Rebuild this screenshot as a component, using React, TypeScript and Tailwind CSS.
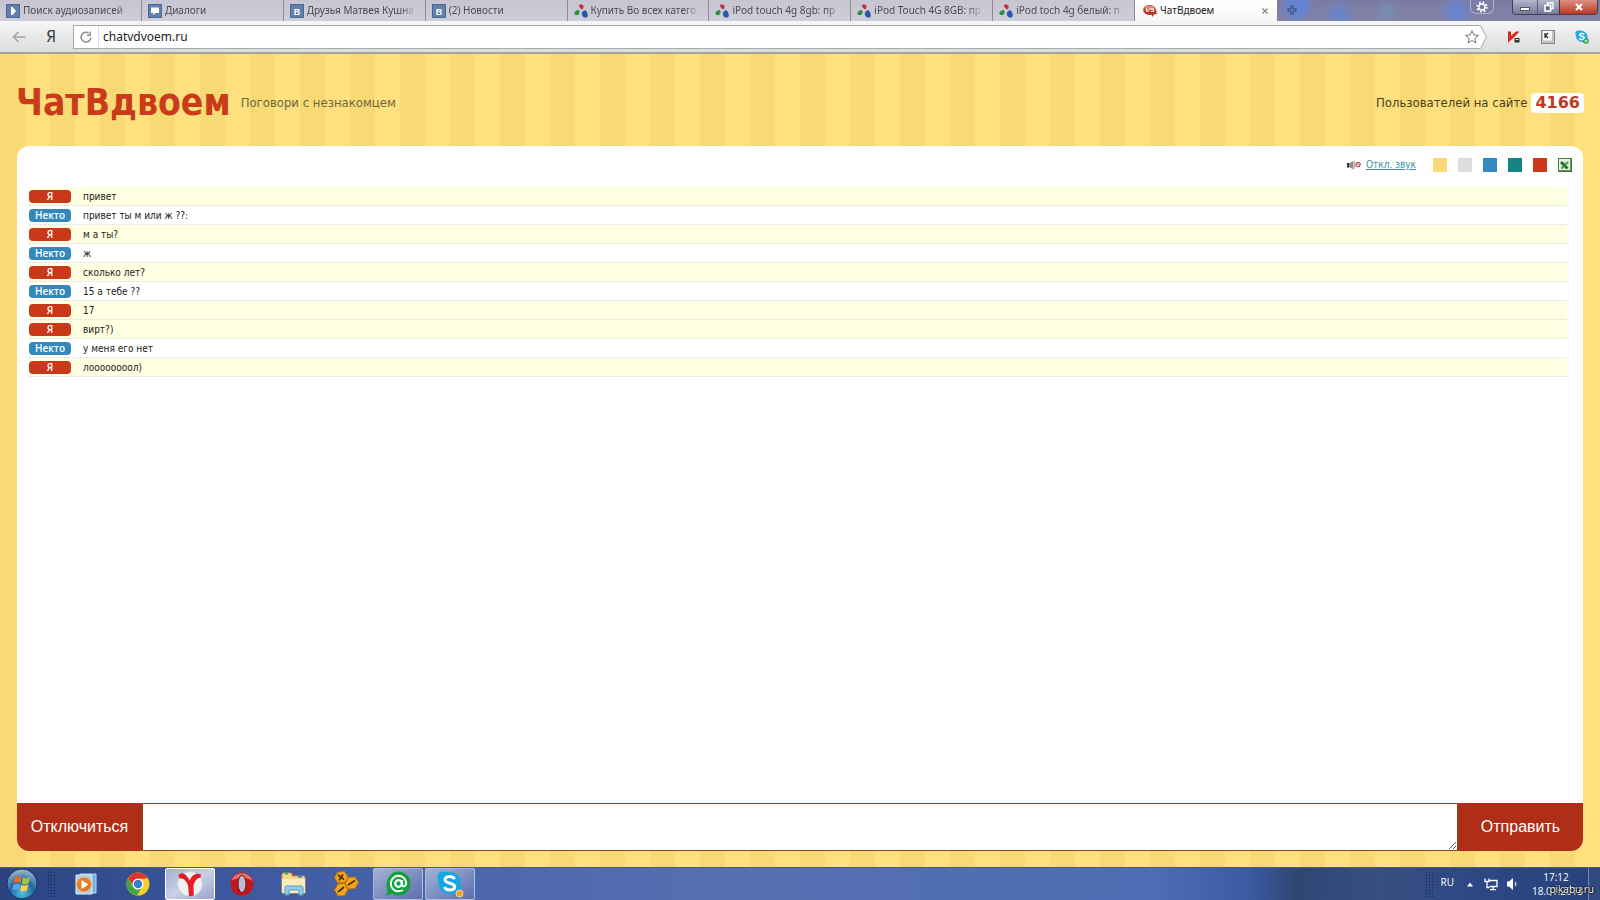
import React, { useState } from 'react';

type Favicon = 'audio' | 'dialog' | 'vk' | 'avito' | 'chat';

const tabs: { title: string; icon: Favicon }[] = [
  { title: 'Поиск аудиозаписей', icon: 'audio' },
  { title: 'Диалоги', icon: 'dialog' },
  { title: 'Друзья Матвея Кушна', icon: 'vk' },
  { title: '(2) Новости', icon: 'vk' },
  { title: 'Купить Во всех катего', icon: 'avito' },
  { title: 'iPod touch 4g 8gb: пр', icon: 'avito' },
  { title: 'iPod Touch 4G 8GB: пр', icon: 'avito' },
  { title: 'iPod toch 4g белый: п', icon: 'avito' },
];

const messages = [
  { me: true, text: 'привет' },
  { me: false, text: 'привет ты м или ж ??:' },
  { me: true, text: 'м а ты?' },
  { me: false, text: 'ж' },
  { me: true, text: 'сколько лет?' },
  { me: false, text: '15 а тебе ??' },
  { me: true, text: '17' },
  { me: true, text: 'вирт?)' },
  { me: false, text: 'у меня его нет' },
  { me: true, text: 'лоооооооол)' },
];

const themes = [
  { name: 'Жёлтая', color: 'bg-[#f9da77]' },
  { name: 'Серая', color: 'bg-[#dddddd]' },
  { name: 'Синяя', color: 'bg-[#3489c0]' },
  { name: 'Зелёная', color: 'bg-[#178484]' },
  { name: 'Красная', color: 'bg-[#c93818]' },
];

const tahoma = "font-['DejaVu_Sans_Condensed','DejaVu_Sans',sans-serif]";

function TabIcon({ icon }: { icon: Favicon }) {
  if (icon === 'avito') {
    return (
      <svg viewBox="0 0 14 14" className="size-3.5 shrink-0" aria-hidden="true">
        <path d="M5 1.500C5-.2 9.800.2 9.600 2.400 9.500 4.400 8.600 5.600 7.700 5.200 6.600 4.800 5 3.200 5 1.500Z" fill="#c22f43" />
        <path d="M.3 9.200C.6 7.200 4 5.200 5 6.300c.9.900.8 3.300-.4 4.300C3.200 11.700.1 11 .3 9.200Z" fill="#2f8f45" />
        <path d="M8 8.700c-.6 1-.1 3.600 1.700 4.500 1.800.7 3.900.3 4.100-1.500C14 9.800 12.400 6.200 11 6.300 9.900 6.400 8.600 7.600 8 8.700Z" fill="#2c56ae" />
      </svg>
    );
  }
  if (icon === 'chat') {
    return (
      <svg viewBox="0 0 14 14" className="size-3.5 shrink-0" aria-hidden="true">
        <ellipse cx="6.500" cy="6" rx="6.300" ry="5" fill="#bd3a24" />
        <ellipse cx="6.500" cy="4" rx="5" ry="2.500" fill="#e08773" />
        <path d="M6 6.500h7.500v3.700h-2.500L9.500 13 8.500 10.200H6z" fill="#b5331e" />
        <path d="M3.500 4.500V7h3M6.500 5h4v2.500H8" fill="none" stroke="#fff" strokeWidth="1.100" />
      </svg>
    );
  }
  return (
    <svg viewBox="0 0 14 14" className="size-3.5 shrink-0" aria-hidden="true">
      <rect x=".5" y=".5" width="13" height="13" fill="#5f81ab" stroke="#47699a" />
      {icon === 'audio' && <path d="M5 3h1.500L10 7l-3.500 4H5z" fill="#fff" />}
      {icon === 'dialog' && <path d="M3 3.500h8v5.500H7.500L5 11V9H3z" fill="#fff" />}
      {icon === 'vk' && (
        <text x="7" y="10.500" textAnchor="middle" fontSize="9" fontWeight="700" fill="#fff" fontFamily="Liberation Sans, sans-serif">
          B
        </text>
      )}
    </svg>
  );
}

function TabStrip() {
  return (
    <div className="flex h-[21px] bg-[#7d80aa] font-['Noto_Sans',sans-serif] text-[10px]">
      <div className="grid min-w-0 flex-1 grid-cols-9">
        {tabs.map((tab) => (
          <button
            key={tab.title}
            className="flex min-w-0 items-center gap-[3px] border-r border-[#8b8b9b] bg-linear-to-b from-[#c6c5d1] to-[#cfced8] pr-2 pl-1.5 text-[#4b4a54]"
          >
            <TabIcon icon={tab.icon} />
            <span className="min-w-0 flex-1 overflow-hidden text-left whitespace-nowrap mask-r-from-85%">{tab.title}</span>
          </button>
        ))}
        <div className="flex min-w-0 items-center bg-linear-to-b from-white to-[#f6f6f6] px-2 text-[#222]">
          <button className="flex min-w-0 flex-1 items-center gap-[3px]">
            <TabIcon icon="chat" />
            <span>ЧатВдвоем</span>
          </button>
          <button aria-label="Закрыть вкладку">
            <svg viewBox="0 0 8 8" className="size-2">
              <path d="m1.500 1.500 5 5m0-5-5 5" stroke="#8b8b8b" strokeWidth="1.400" />
            </svg>
          </button>
        </div>
      </div>
      <WindowControls />
    </div>
  );
}

function WindowControls() {
  return (
    <div className="flex w-[323px] shrink-0 items-start bg-[radial-gradient(circle_at_20px_6px,#6484d0_0,#6484d0_8px,transparent_18px),radial-gradient(circle_at_62px_15px,#6484d0_0,transparent_16px),radial-gradient(circle_at_110px_12px,#7593b2_0,transparent_12px),radial-gradient(circle_at_180px_12px,#6484d8_0,transparent_18px),linear-gradient(#7a7ba4,#8483a8)] pr-0.5">
      <button aria-label="Новая вкладка" className="mt-[5px] ml-2.5">
        <svg viewBox="0 0 10 10" className="size-2.5">
          <path d="M5 .5v9M.5 5h9" stroke="#37437a" strokeWidth="3" />
          <path d="M5 1.500v7M1.500 5h7" stroke="#7f93cc" strokeWidth="1" />
        </svg>
      </button>
      <button
        aria-label="Настройки"
        className="mr-[18px] ml-auto flex h-3.5 w-6 items-center justify-center rounded-b-md border border-t-0 border-[#b0b2cc] bg-[#7b7da5]"
      >
        <svg viewBox="0 0 12 12" className="size-3">
          <circle cx="6" cy="6" r="4.600" fill="none" stroke="#fff" strokeWidth="2" strokeDasharray="1.800 1.810" />
          <circle cx="6" cy="6" r="3" fill="none" stroke="#fff" strokeWidth="1.300" />
        </svg>
      </button>
      <div className="flex h-[15px] w-[86px] overflow-hidden rounded-b border border-t-0 border-[#3f4159]">
        <button aria-label="Свернуть" className="flex w-6 items-center justify-center bg-linear-to-b from-[#b5b6c9] to-[#77799b]">
          <svg viewBox="0 0 10 4" className="mt-1 h-1 w-2.5">
            <rect x=".5" y=".5" width="9" height="3" fill="#fff" stroke="#555770" />
          </svg>
        </button>
        <button aria-label="Развернуть" className="flex w-[22px] items-center justify-center border-l border-[#5a5c77] bg-linear-to-b from-[#b5b6c9] to-[#77799b]">
          <svg viewBox="0 0 10 10" className="size-2.5" fill="none">
            <path d="M3.500 3V1h5.500v5.500H7" stroke="#fff" strokeWidth="1.400" />
            <rect x="1" y="3.500" width="5.500" height="5.500" fill="#666883" stroke="#fff" strokeWidth="1.600" />
          </svg>
        </button>
        <button aria-label="Закрыть" className="flex flex-1 items-center justify-center border-l border-[#5a2a2a] bg-linear-to-b from-[#db8f82] to-[#b93321]">
          <svg viewBox="0 0 10 10" className="size-2.5">
            <path d="m2 2 6 6m0-6-6 6" stroke="#fff" strokeWidth="2.200" />
          </svg>
        </button>
      </div>
    </div>
  );
}

function Toolbar() {
  return (
    <div className="flex h-[33px] items-center border-b-2 border-[#a3a598] bg-linear-to-b from-[#f6f6f6] to-[#dcdddd]">
      <button aria-label="Назад" className="ml-3">
        <svg viewBox="0 0 14 12" className="h-3 w-3.5" fill="none" stroke="#a5a5a5" strokeWidth="1.700">
          <path d="M13.500 6H1.500M6.500 1 1.500 6l5 5" />
        </svg>
      </button>
      <button aria-label="Яндекс" className="mr-1.5 ml-2.5 w-[30px] font-['DejaVu_Sans_Condensed',sans-serif] text-base leading-5 text-[#3c3c3c]">
        Я
      </button>
      <div className="ml-px flex h-6 flex-1 items-center">
        <div className="flex h-full flex-1 items-center border border-r-0 border-[#a9a9a9] bg-white">
          <button aria-label="Обновить" className="flex h-full w-[25px] items-center justify-center border-r border-[#dedede]">
            <svg viewBox="0 0 12 12" className="size-3" fill="none" stroke="#8c8c8c" strokeWidth="1.500">
              <path d="M10.900 6.500A4.900 4.900 0 1 1 8.500 1.900" />
              <path d="M7 4.200h3.200V.5" />
            </svg>
          </button>
          <input
            aria-label="Адрес"
            defaultValue="chatvdvoem.ru"
            className="h-full min-w-0 flex-1 px-1 font-['Noto_Sans',sans-serif] text-xs text-[#222] outline-none"
          />
          <button aria-label="В закладки">
            <svg viewBox="0 0 14 14" className="size-3.5" fill="none" stroke="#8f8f8f" strokeWidth="1.100">
              <path d="m7 .9 1.900 4 4.400.5-3.300 3 .9 4.400L7 10.600l-3.900 2.200.9-4.400-3.300-3 4.400-.5z" />
            </svg>
          </button>
        </div>
        <svg viewBox="0 0 8 24" className="h-6 w-2" fill="#fff" stroke="#a9a9a9">
          <path d="M0 .5h1.500L7.500 12l-6 11.500H0" />
        </svg>
      </div>
      <div className="ml-5 flex items-center gap-5 pr-[11px]">
        <button aria-label="Kaspersky">
          <svg viewBox="0 0 14 14" className="size-3.5">
            <path d="M1 1.500h3v4.300L9 1.500h3.500L6.500 8l-4.500 4L1 13z" fill="#d32b22" />
            <path d="M2 12 7 7.500V13H3z" fill="#efe6e4" />
            <rect x="7.500" y="8" width="5" height="4.500" fill="#333" />
            <path d="M8.500 9.500h3" stroke="#ddd" />
          </svg>
        </button>
        <button aria-label="Клавиатура">
          <svg viewBox="0 0 14 14" className="size-3.5">
            <rect x=".5" y=".5" width="13" height="13" fill="#c2c2c2" stroke="#858585" />
            <rect x="2" y="1" width="9" height="9.500" fill="#f7f7f7" />
            <path d="M4 3v5M7 3 4.500 5.500 7 8" stroke="#222" strokeWidth="1.200" fill="none" />
          </svg>
        </button>
        <button aria-label="Skype">
          <svg viewBox="0 0 14 14" className="size-3.5">
            <path d="M3.500.5C.5.500-.5 4 1 5.500.8 9 3.500 12 7 12c2.500 1.500 6 0 5.500-3.500C13 4 10 .8 6.500 1 5.600.5 4.500.4 3.500.5Z" fill="#24a9e0" />
            <path d="M9.200 4.300C8.300 3 4.600 3 4.600 4.900 4.600 6.700 9.400 5.900 9.400 8 9.400 9.900 5.200 9.900 4.300 8.300" fill="none" stroke="#fff" strokeWidth="1.500" />
            <circle cx="11" cy="11" r="2.800" fill="#2ea13c" />
            <path d="M11 9.500v3M9.500 11h3" stroke="#fff" strokeWidth=".8" />
          </svg>
        </button>
      </div>
    </div>
  );
}

function ChatHeader() {
  return (
    <header className={`flex h-[92px] items-center justify-between px-4 pt-1.5 ${tahoma}`}>
      <div className="flex items-center gap-2.5">
        <h1 className="text-[37px] leading-[48px] font-bold text-[#c93c1a]">ЧатВдвоем</h1>
        <span className="text-[13px] text-[#6d673f]">Поговори с незнакомцем</span>
      </div>
      <div className="flex items-center gap-1">
        <span className="text-[13px] text-[#4b3f1c]">Пользователей на сайте</span>
        <span className="rounded bg-white px-1 font-['DejaVu_Sans',sans-serif] text-base leading-5 font-bold text-[#bf3a22]">4166</span>
      </div>
    </header>
  );
}

function ChatTools() {
  return (
    <div className="flex h-[41px] items-center justify-end pr-[11px] pb-1">
      <svg viewBox="0 0 14 10" className="h-2.5 w-3.5" aria-hidden="true">
        <path d="M0 3h2.500v4.500H0z" fill="#333" />
        <path d="M3 3 6.500.5v9L3 7.500z" fill="#8d8d8d" />
        <path d="M7.500 1.500v7" stroke="#bbb" />
        <circle cx="11" cy="4.500" r="2.200" fill="#fff" stroke="#c05252" strokeWidth="1.200" />
        <path d="m9.600 3 2.800 3" stroke="#c05252" />
      </svg>
      <a href="#sound" className={`mr-[17px] ml-[5px] text-[10px] text-[#3b8fa8] underline ${tahoma}`}>
        Откл. звук
      </a>
      <div className="flex gap-[11px]">
        {themes.map((theme) => (
          <button key={theme.name} aria-label={theme.name} className={`size-3.5 ${theme.color}`} />
        ))}
        <button aria-label="Excel">
          <svg viewBox="0 0 14 14" className="size-3.5">
            <rect x=".5" y=".5" width="13" height="13" fill="#e9f2e4" stroke="#477f3c" />
            <path d="M13 1v12H1" fill="none" stroke="#3f7535" strokeWidth="1.500" />
            <rect x="2.500" y="3" width="8.500" height="8" fill="#cfe5c8" />
            <path d="m3 4 6.500 6.500" stroke="#1e6b28" strokeWidth="2.500" />
            <path d="M10 4 3.500 10.500" stroke="#2f8a3a" strokeWidth="1.700" />
          </svg>
        </button>
      </div>
    </div>
  );
}

function Chat() {
  const [text, setText] = useState('');

  return (
    <main className="flex flex-1 flex-col bg-[repeating-linear-gradient(90deg,#f8da75_0_25px,#ffe07e_25px_50px)]">
      <ChatHeader />
      <section className="mx-[17px] mb-4 flex flex-1 flex-col overflow-hidden rounded-xl bg-white">
        <ChatTools />
        <ul className={`mr-4 ml-3 flex-1 text-[10px] text-[#222] ${tahoma}`}>
          {messages.map((msg, i) => (
            <li
              key={i}
              className={`flex h-[19px] items-center border-b border-dotted border-[#d9d9d9] ${msg.me ? 'bg-[#ffffe1]' : 'bg-white'}`}
            >
              <span
                className={`mr-3 w-[42px] rounded text-center font-['Open_Sans',sans-serif] leading-[13px] font-semibold text-white ${
                  msg.me ? 'bg-[#c93818]' : 'bg-[#3588bb]'
                }`}
              >
                {msg.me ? 'Я' : 'Некто'}
              </span>
              {msg.text}
            </li>
          ))}
        </ul>
        <form className="flex h-12 font-['Liberation_Sans',sans-serif] text-base text-white" onSubmit={(e) => e.preventDefault()}>
          <button type="button" className="w-[125px] bg-[#b02d17]">
            Отключиться
          </button>
          <textarea
            aria-label="Сообщение"
            value={text}
            onChange={(e) => setText(e.target.value)}
            className="h-full min-w-0 flex-1 border border-[#8c4526] bg-white p-1 text-black outline-none"
          />
          <button type="submit" className="w-[125px] bg-[#b02d17]">
            Отправить
          </button>
        </form>
      </section>
    </main>
  );
}

function Grip() {
  return <span className="h-[26px] w-2 bg-[radial-gradient(#16264f_1px,transparent_1px)] bg-size-[3px_3px]" />;
}

const taskButton = 'flex h-full w-[50px] items-center justify-center';
const activeTask = 'rounded-xs border border-[#c3cde8]/70 bg-linear-to-br from-[#a5b1d6] to-[#5a6fae]';

function Taskbar() {
  return (
    <footer className="flex h-[33px] items-center border-t border-[#4c5a7c] bg-[linear-gradient(90deg,#2a4280_0,#3a559b_12%,#4a66ae_28%,#566fb2_45%,#4e6db4_72%,#3a5aa5_78%,#2f4675_81%,#374f80_86%,#2d4884_92%,#27437c_100%)] font-['Open_Sans',sans-serif] text-white">
      <button aria-label="Пуск" className="ml-1.5">
        <svg viewBox="0 0 32 32" className="size-8">
          <defs>
            <radialGradient id="orb" cx=".5" cy=".8" r=".8">
              <stop offset="0" stopColor="#49c4ea" />
              <stop offset=".5" stopColor="#22669c" />
              <stop offset="1" stopColor="#a7bfd4" />
            </radialGradient>
          </defs>
          <circle cx="16" cy="16" r="15" fill="url(#orb)" stroke="#183360" />
          <path d="M9 9.500c2.500-1.600 4.500-1.500 6.800-.4L14.500 15c-2.300-1-4.300-1-6.800.4z" fill="#ea6a2c" />
          <path d="M17 9.600c2.300 1.200 4.500 1.100 7.200-.3l-1.500 6c-2.500 1.400-4.700 1.400-7 .2z" fill="#96c842" />
          <path d="M7.400 16.700c2.500-1.400 4.500-1.300 6.800-.3l-1.500 5.800c-2.300-1-4.300-1-6.700.3z" fill="#54a6e4" />
          <path d="M15.400 16.800c2.300 1.200 4.500 1.100 7-.2l-1.500 5.900c-2.500 1.300-4.700 1.300-7 .1z" fill="#fbd045" />
        </svg>
      </button>
      <div className="ml-[9px] flex h-full flex-1 items-center">
        <Grip />
        <div className="ml-1.5 flex h-full gap-0.5">
          <button aria-label="Проигрыватель" className={taskButton}>
            <svg viewBox="0 0 24 24" className="size-6">
              <path d="M6 2h16v19H6z" fill="#6eb0d8" stroke="#b8dcee" />
              <path d="M2 3h16v19H2z" fill="#a4cfe6" stroke="#dceef6" />
              <circle cx="10" cy="12.500" r="7.500" fill="#e57a22" stroke="#f5c394" />
              <path d="m7.500 8 7 4.500-7 4.500z" fill="#fff" />
            </svg>
          </button>
          <button aria-label="Chrome" className={taskButton}>
            <svg viewBox="0 0 24 24" className="size-6">
              <circle cx="12" cy="12" r="11.500" fill="#f7cf2d" />
              <path d="M2 6.300a11.500 11.500 0 0 1 20 0L12 7 7.700 14.500z" fill="#d9382b" />
              <path d="M2 6.300A11.500 11.500 0 0 0 11 23.500l5.300-9-4.300 3-5-3z" fill="#3fa548" />
              <circle cx="12" cy="12" r="5.500" fill="#fff" />
              <circle cx="12" cy="12" r="4.200" fill="#3b7dc9" />
            </svg>
          </button>
          <button aria-label="Яндекс.Браузер" className="flex h-full w-[50px] items-center justify-center rounded-xs border border-white bg-linear-to-br from-[#a3b0d2] via-[#c9d0e5] to-[#96a4cb]">
            <svg viewBox="0 0 26 26" className="size-[26px]">
              <circle cx="13" cy="13" r="12.500" fill="#f1f1f4" stroke="#c5cad8" />
              <path d="M1.500 4C5 .5 9 2.500 12.500 9.500 15 4.500 19 1.500 24 3.500l-.5 3c-3.500.5-5.500 3-7 7.500l.3 10.500-4.800 1L11 14C8.500 8.500 6 7 2.500 7.500z" fill="#e81c24" />
            </svg>
          </button>
          <button aria-label="Opera" className={taskButton}>
            <svg viewBox="0 0 24 24" className="size-6">
              <ellipse cx="12" cy="12" rx="11.500" ry="11.500" fill="#c3161c" />
              <path d="M1.500 9C4-1.500 20-1.500 22.500 9 18 5 6 5 1.500 9Z" fill="#e2716d" />
              <ellipse cx="12" cy="12" rx="4" ry="8.500" fill="#b9bdd0" stroke="#7d0c10" />
            </svg>
          </button>
          <button aria-label="Проводник" className={taskButton}>
            <svg viewBox="0 0 28 24" className="h-6 w-7">
              <path d="M2 3c0-1 1-2 2-2h7l2 3h11l1 2v15H2z" fill="#f2d88a" stroke="#c3a65c" />
              <path d="M5 1.500h3" stroke="#3fa548" strokeWidth="2" />
              <path d="M12 3h3" stroke="#cf3f35" strokeWidth="2" />
              <path d="M18 4.500h4" stroke="#3578c9" strokeWidth="2" />
              <path d="M2 7h23v14H2z" fill="#f9ecb9" />
              <path d="M5 23v-7c0-1.500.8-2 2-2h14c1.200 0 2 .5 2 2v7h-4v-5H9v5z" fill="#8fcdeb" stroke="#579fc9" />
            </svg>
          </button>
          <button aria-label="Ключи" className={taskButton}>
            <svg viewBox="0 0 26 26" className="size-[26px]">
              <g fill="#f3a61d" stroke="#b97508">
                <path d="m5 1 6.500-.5L15 6l-3 5.500-7 .5-3.500-5.500z" />
                <path d="m15 6.500 7-.5 3.500 5.500-3.500 6-6.500.5-3.500-6z" />
                <path d="m5 13 6.500-.5L15 18l-3.500 6.500-6.500.5L1.500 19z" />
              </g>
              <path d="m5 4 6 4.500M10 3.500l-4 6M15 14l7-4.500M5 21l6-5" stroke="#4d3206" strokeWidth="1.700" />
            </svg>
          </button>
          <button aria-label="Mail.Ru Агент" className={`${taskButton} ${activeTask}`}>
            <svg viewBox="0 0 26 26" className="size-[26px]">
              <path d="M13.500.5C20 .5 25.500 6 25.500 12.500S20 24.500 13.500 24.500c-3 0-5-.8-7-2L1 25l1.500-6C-1 10 5 .5 13.500.5Z" fill="#14a13b" />
              <circle cx="13.500" cy="12.500" r="3.300" fill="none" stroke="#fff" strokeWidth="2.200" />
              <path d="M17 9v4.500c0 3 4 2.500 4-1.500 0-4-3.500-7.300-7.500-7.300S5.800 8 5.800 12.500s3.400 7.800 7.700 7.800c1.800 0 3-.4 4.500-1.300" fill="none" stroke="#fff" strokeWidth="2" />
            </svg>
          </button>
          <button aria-label="Skype" className={`${taskButton} ${activeTask}`}>
            <svg viewBox="0 0 28 28" className="size-7">
              <path d="M8 1.500C3 1 0 6 2.500 10.500 1.500 19 8 25 16 23.500c6 2.500 11-3 8.500-9C25 6.500 19.500 1.500 13 2.500 11.500 1.700 9.700 1.500 8 1.500Z" fill="#10a7e4" />
              <path d="M18.500 9.300C17 5.500 8.800 5.800 9 9.800c.2 4.500 9.700 2.500 9.700 7 0 4.200-8.700 4.300-10.200.2" fill="none" stroke="#fff" strokeWidth="3" />
              <circle cx="23.500" cy="23.500" r="3.500" fill="#f2a324" stroke="#f8d79a" />
            </svg>
          </button>
        </div>
      </div>
      <Grip />
      <span className="ml-2 pb-1 text-[10px]">RU</span>
      <button aria-label="Скрытые значки" className="ml-3">
        <svg viewBox="0 0 8 8" className="size-2">
          <path d="M1 6.500h6L4 2.500z" fill="#fff" />
        </svg>
      </button>
      <svg viewBox="0 0 14 14" className="ml-2.5 size-3.5" fill="none" stroke="#fff" strokeWidth="1.300">
        <path d="M4.500 3.500H13v6H5.500M9 9.500v3M6 12.700h6M3 5v5.500h2.500M1 1.500v3h4v-3" />
      </svg>
      <svg viewBox="0 0 12 14" className="ml-2 h-3.5 w-3">
        <path d="M1 4.500h2L7 1v12L3 9.500H1z" fill="#fff" />
        <path d="M9 5c1 1.200 1 3 0 4" fill="none" stroke="#cfd7ea" strokeWidth="1.200" />
      </svg>
      <div className="relative ml-3.5 w-12 text-center text-[10px] leading-3.5">
        <div>17:12</div>
        <div>18.01.2013</div>
        <span className="absolute right-[-14px] bottom-0.5 text-[10px] leading-3.5 text-shadow-[0_0_2px_#000,0_0_2px_#000,0_0_1px_#000]">
          pikabu.ru
        </span>
      </div>
      <div className="ml-2 h-full w-3 border-l border-[#7586b2] bg-[#31497f]" />
    </footer>
  );
}

export default function App() {
  return (
    <div className="flex min-h-screen flex-col">
      <TabStrip />
      <Toolbar />
      <Chat />
      <Taskbar />
    </div>
  );
}
